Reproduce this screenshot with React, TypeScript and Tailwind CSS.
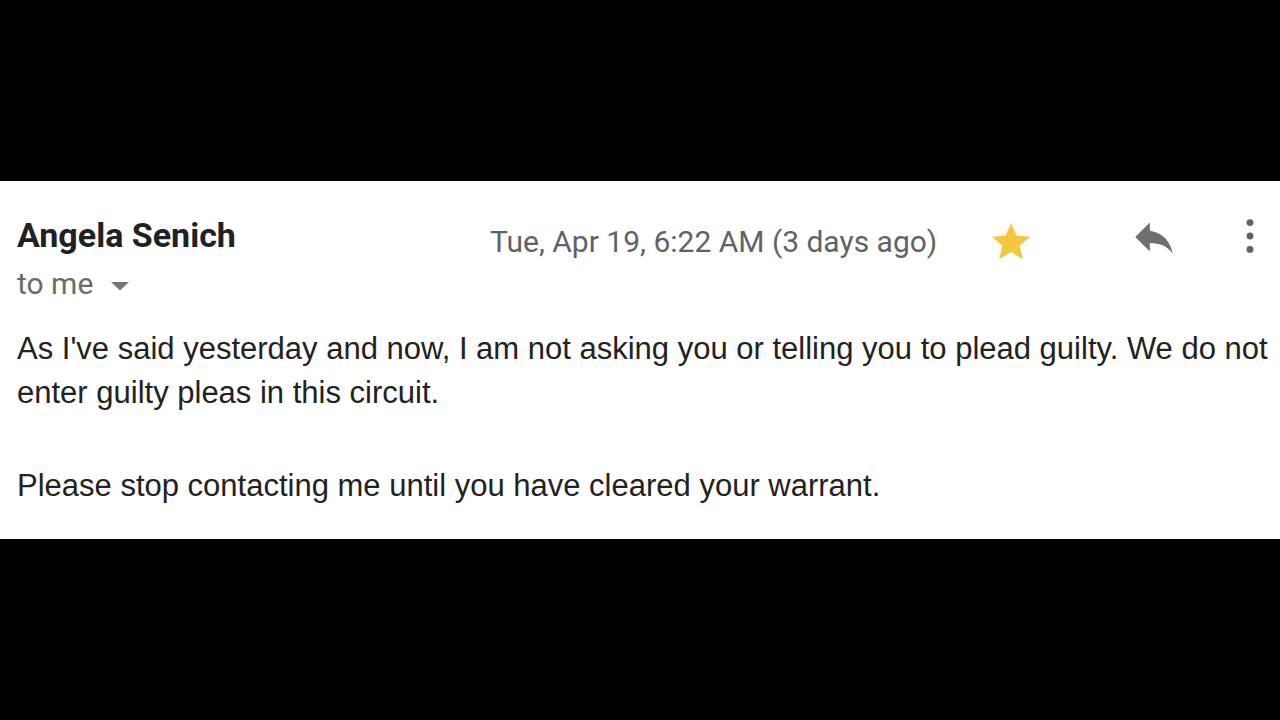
import React from "react";

export default function App() {
  return (
    <div className="w-[1280px] h-[720px] bg-black flex flex-col">
      <div className="h-[181px] shrink-0" />
      <div className="h-[358px] shrink-0 bg-white pl-[17px] flex flex-col">
        <div className="flex items-start pt-[34px]">
          <div className="flex flex-col w-[473px] shrink-0">
            <div className="text-[34px] leading-[40px] font-bold text-[#202124]" style={{ fontFamily: "Roboto, sans-serif" }}>
              Angela Senich
            </div>
            <div className="flex items-center mt-[11px] text-[30px] leading-[36px] text-[#6b6b6b]" style={{ fontFamily: "Roboto, sans-serif" }}>
              <span>to me</span>
              <svg className="ml-[17px] mt-[4px]" width="20" height="10" viewBox="0 0 20 10">
                <path d="M1 1h18L10 9.5z" fill="#777" />
              </svg>
            </div>
          </div>
          <div className="text-[30px] leading-[36px] text-[#5f6368] mt-[9px] w-[498px] shrink-0" style={{ fontFamily: "Roboto, sans-serif" }}>
            Tue, Apr 19, 6:22 AM (3 days ago)
          </div>
          <svg className="mt-[4px] shrink-0" width="46" height="46" viewBox="0 0 24 24">
            <path d="M12 17.27L18.18 21l-1.64-7.03L22 9.24l-7.19-.61L12 2 9.19 8.63 2 9.24l5.46 4.73L5.82 21z" fill="#f6c642" />
          </svg>
          <svg className="ml-[95px] mt-[-3px] shrink-0" width="50" height="50" viewBox="0 0 24 24">
            <path d="M10 9V5l-7 7 7 7v-4.1c5 0 8.5 1.6 11 5.1-1-5-4-10-11-11z" fill="#6f6f6f" />
          </svg>
          <svg className="ml-[48px] mt-[-2px] shrink-0" width="46" height="46" viewBox="0 0 24 24">
            <circle cx="12" cy="5" r="1.8" fill="#5f6368" />
            <circle cx="12" cy="12" r="1.8" fill="#5f6368" />
            <circle cx="12" cy="19" r="1.8" fill="#5f6368" />
          </svg>
        </div>
        <div className="mt-[25px] text-[31px] leading-[43.5px] text-[#222222]" style={{ fontFamily: "'Liberation Sans', Arial, sans-serif" }}>
          <p className="whitespace-nowrap">As I've said yesterday and now, I am not asking you or telling you to plead guilty. We do not<br />enter guilty pleas in this circuit.</p>
          <p className="mt-[50px] whitespace-nowrap">Please stop contacting me until you have cleared your warrant.</p>
        </div>
      </div>
      <div className="flex-1" />
    </div>
  );
}
